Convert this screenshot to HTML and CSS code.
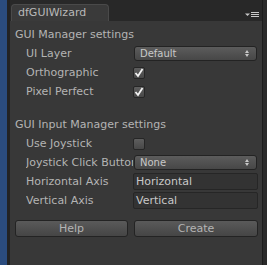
FILE: index.html
```html
<!DOCTYPE html>
<html lang="en">
<head>
    <meta charset="UTF-8">
    <meta name="viewport" content="width=device-width, initial-scale=1.0">
    <title>dfGUIWizard</title>
    <link rel="stylesheet" href="styles.css">
</head>
<body>

    <div class="app">
        <div class="dock-edge"></div>
        <div class="window">
            <div class="tabbar">
                <div class="tab">dfGUIWizard</div>
                <div class="tab-menu">
                    <svg width="15" height="6" viewBox="0 0 15 6">
                        <path d="M0 1.5h5L2.5 4z" fill="#c8c8c8"/>
                        <rect x="6" y="0" width="8" height="1" fill="#c8c8c8"/>
                        <rect x="6" y="2" width="8" height="1" fill="#c8c8c8"/>
                        <rect x="6" y="4" width="8" height="1" fill="#c8c8c8"/>
                    </svg>
                </div>
            </div>

            <div class="panel">
                <div class="section-title">GUI Manager settings</div>
                <div class="field-row">
                    <label>UI Layer</label>
                    <div class="popup">Default<span class="popup-arrows"></span></div>
                </div>
                <div class="field-row">
                    <label>Orthographic</label>
                    <div class="toggle checked"></div>
                </div>
                <div class="field-row">
                    <label>Pixel Perfect</label>
                    <div class="toggle checked"></div>
                </div>

                <div class="section-title second">GUI Input Manager settings</div>
                <div class="field-row">
                    <label>Use Joystick</label>
                    <div class="toggle"></div>
                </div>
                <div class="field-row">
                    <label>Joystick Click Button</label>
                    <div class="popup">None<span class="popup-arrows"></span></div>
                </div>
                <div class="field-row">
                    <label>Horizontal Axis</label>
                    <div class="text-field">Horizontal</div>
                </div>
                <div class="field-row">
                    <label>Vertical Axis</label>
                    <div class="text-field">Vertical</div>
                </div>

                <div class="buttons">
                    <button>Help</button>
                    <button>Create</button>
                </div>
            </div>
        </div>
    </div>

</body>
</html>
```

FILE: styles.css
```css
body {
    margin: 0;
    background: #2a2a2a;
    font-family: 'DejaVu Sans', 'Liberation Sans', sans-serif;
    font-size: 11px;
    color: #b4b4b4;
}

.app {
    display: flex;
    width: 267px;
    height: 265px;
}

.dock-edge {
    width: 7px;
    background: #2b4c7e;
}

.window {
    flex: 1;
    display: flex;
    flex-direction: column;
    border-left: 3px solid #232323;
    border-right: 1px solid #1c1c1c;
    margin-right: 4px;
}

.tabbar {
    height: 21px;
    background: #282828;
    display: flex;
    align-items: flex-end;
}

.tab {
    margin-left: 1px;
    width: 98px;
    height: 17px;
    box-sizing: border-box;
    background: #3a3a3a;
    border: 1px solid #4a4a4a;
    border-bottom: none;
    border-radius: 4px 4px 0 0;
    padding-left: 6px;
    line-height: 16px;
    font-size: 11px;
    color: #b8b8b8;
}

.tab-menu {
    margin-left: auto;
    margin-right: 2px;
    margin-bottom: 3px;
    display: flex;
}

.panel {
    flex: 1;
    background: #383838;
    padding: 4px 4px 0 5px;
}

.section-title {
    height: 19px;
    line-height: 19px;
    white-space: nowrap;
}

.section-title.second {
    margin-top: 14px;
}

.field-row {
    display: grid;
    grid-template-columns: 107px 1fr;
    height: 19px;
    align-items: center;
    padding-left: 11px;
}

.field-row label {
    line-height: 19px;
    white-space: nowrap;
    overflow: hidden;
}

.popup {
    position: relative;
    height: 15px;
    box-sizing: border-box;
    margin: 0 1px;
    border: 1px solid #232323;
    border-radius: 3px;
    background: linear-gradient(#5c5c5c, #474747);
    padding-left: 5px;
    font-size: 10px;
    line-height: 13px;
    color: #c8c8c8;
}

.popup-arrows {
    position: absolute;
    right: 6px;
    top: 3px;
    width: 5px;
    height: 7px;
}

.popup-arrows::before,
.popup-arrows::after {
    content: '';
    position: absolute;
    left: 0;
    border-left: 2.5px solid transparent;
    border-right: 2.5px solid transparent;
}

.popup-arrows::before {
    top: 0;
    border-bottom: 3px solid #c8c8c8;
}

.popup-arrows::after {
    bottom: 0;
    border-top: 3px solid #c8c8c8;
}

.toggle {
    width: 12px;
    height: 12px;
    box-sizing: border-box;
    border: 1px solid #262626;
    border-radius: 2px;
    background: linear-gradient(#5e5e5e, #484848);
}

.toggle.checked {
    background-image: url("data:image/svg+xml,%3Csvg xmlns='http://www.w3.org/2000/svg' width='10' height='10'%3E%3Cpath d='M1.5 5l2.5 3 4.5-7' fill='none' stroke='%23f2f2f2' stroke-width='1.8'/%3E%3C/svg%3E"), linear-gradient(#5e5e5e, #484848);
    background-repeat: no-repeat;
}

.text-field {
    height: 17px;
    box-sizing: border-box;
    border: 1px solid #262626;
    border-radius: 2px;
    background: #333;
    padding-left: 2px;
    line-height: 15px;
    color: #c8c8c8;
    white-space: nowrap;
}

.buttons {
    display: grid;
    grid-template-columns: 113px 1fr;
    gap: 6px;
    margin-top: 10px;
}

.buttons button {
    height: 17px;
    border: 1px solid #232323;
    border-radius: 3px;
    background: linear-gradient(#5a5a5a, #454545);
    font-family: inherit;
    font-size: 11px;
    color: #b4b4b4;
    padding: 0;
}
```
